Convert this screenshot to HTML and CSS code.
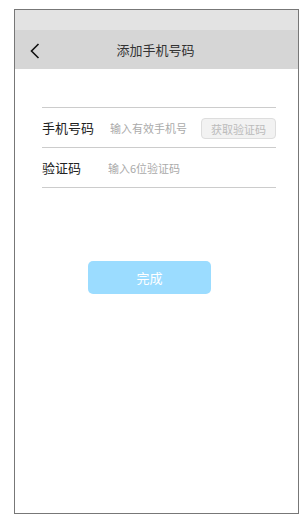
FILE: index.html
```html
<!DOCTYPE html>
<html lang="zh-CN">
  <head>
    <meta charset="UTF-8" />
    <meta name="viewport" content="width=device-width, initial-scale=1.0" />
    <title>添加手机号码</title>
    <link rel="stylesheet" href="styles.css">
  </head>
  <body>
    <div class="phone">
      <div class="status-bar"></div>
      <div class="nav-bar">
        <span class="back">
          <svg width="10" height="16" viewBox="0 0 10 16">
            <polyline points="8.5,1 1.5,8 8.5,15" fill="none" stroke="#111" stroke-width="1.6" />
          </svg>
        </span>
        <div class="title">添加手机号码</div>
      </div>
      <div class="content">
        <div class="form">
          <div class="row">
            <label>手机号码</label>
            <input class="phone-input" type="text" placeholder="输入有效手机号" />
            <button class="code-button" disabled>获取验证码</button>
          </div>
          <div class="row">
            <label>验证码</label>
            <input class="code-input" type="text" placeholder="输入6位验证码" />
          </div>
        </div>
        <button class="done-button">完成</button>
      </div>
    </div>
  </body>
</html>
```

FILE: styles.css
```css
body {
  font-family: "Noto Sans CJK SC", "Noto Sans", sans-serif;
  background-color: #fff;
  margin: 0;
  padding: 0;
}

.phone {
  width: 283px;
  height: 503px;
  margin: 9px 0 0 14px;
  border: 1px solid #777;
  background-color: #fff;
}

.status-bar {
  height: 20px;
  background-color: #e3e3e3;
}

.nav-bar {
  position: relative;
  height: 39px;
  background-color: #d6d6d6;
  display: flex;
  align-items: center;
  justify-content: center;
}

.back {
  position: absolute;
  left: 15px;
  top: 13px;
  display: flex;
}

.title {
  font-size: 13px;
  color: #333;
  margin-left: -2px;
}

.content {
  padding: 38px 22px 0 27px;
}

.form {
  border-top: 1px solid #ccc;
}

.row {
  height: 39px;
  border-bottom: 1px solid #ccc;
  display: flex;
  align-items: center;
}

.row label {
  font-size: 13px;
  color: #222;
}

.row input {
  border: none;
  outline: none;
  padding: 0;
  font-family: inherit;
  font-size: 11px;
  color: #333;
  background: transparent;
  min-width: 0;
}

.row input::placeholder {
  color: #aaa;
}

.phone-input {
  margin-left: 16px;
  flex: 1;
}

.code-input {
  margin-left: 27px;
  flex: 1;
}

.code-button {
  width: 75px;
  height: 21px;
  padding: 0;
  border: 1px solid #ddd;
  border-radius: 4px;
  background-color: #f2f2f2;
  color: #bbb;
  font-family: inherit;
  font-size: 11px;
  margin-top: 2px;
}

.done-button {
  display: block;
  width: 123px;
  height: 33px;
  margin: 73px 0 0 46px;
  border: none;
  border-radius: 5px;
  background-color: #9bdcff;
  color: #fff;
  font-family: inherit;
  font-size: 13px;
  cursor: pointer;
}
```
